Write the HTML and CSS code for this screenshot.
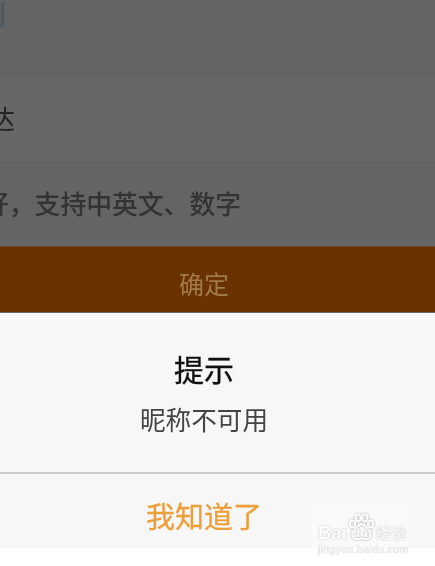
FILE: index.html
```html
<!DOCTYPE html>
<html lang="zh-CN">
<head>
<meta charset="utf-8">
<title>提示</title>
<link rel="stylesheet" href="styles.css">
</head>
<body>
<main class="page">
  <section class="form">
    <div class="row row-top"><span class="clip clip-top">别</span></div>
    <div class="row row-name"><span class="clip clip-name">达</span></div>
    <div class="row row-hint"><span class="clip clip-hint">好，支持中英文、数字</span></div>
    <div class="submit"><span class="soft">确定</span></div>
  </section>
  <section class="dialog">
    <div class="dialog-body">
      <h1 class="title soft">提示</h1>
      <p class="message soft">昵称不可用</p>
    </div>
    <div class="dialog-action"><span class="soft">我知道了</span></div>
  </section>
  <div class="wm-patch"></div>
  <div class="watermark">
    <div class="wm-logo">
      <span class="wm-bai">Bai</span>
      <span class="wm-du">
        <svg class="wm-paw" viewBox="0 0 36 36" width="27" height="28" aria-hidden="true">
          <g fill="none" stroke="#fff" stroke-width="2.6">
            <ellipse cx="6" cy="14" rx="3.6" ry="4.6"/>
            <ellipse cx="13.5" cy="6" rx="3.6" ry="4.6"/>
            <ellipse cx="22.5" cy="6" rx="3.6" ry="4.6"/>
            <ellipse cx="30" cy="14" rx="3.6" ry="4.6"/>
            <path d="M18 14c-4 0-5 4-9 7-5 4-4 13 3 13 2 0 4-1 6-1s4 1 6 1c7 0 8-9 3-13-4-3-5-7-9-7z"/>
          </g>
        </svg>
        <span class="wm-du-text">du</span>
      </span>
      <span class="wm-jy">经验</span>
    </div>
    <div class="wm-url">jingyan.baidu.com</div>
  </div>
</main>
</body>
</html>
```
FILE: styles.css
```css
* { box-sizing: border-box; margin: 0; padding: 0; }
html, body { width: 435px; height: 566px; overflow: hidden; background: #fff; }
body { font-family: "Noto Sans CJK SC", "Noto Sans", sans-serif; }
.page { position: relative; width: 435px; height: 566px; }
.soft { filter: blur(0.5px); }

.form { display: flex; flex-direction: column; height: 313px; background: #666; overflow: hidden; }
.row { overflow: hidden; white-space: nowrap; display: flex; align-items: center; flex: none; }
.row-top { height: 76px; align-items: flex-start; border-bottom: 1px solid #606060; background: #646464; }
.row-name { height: 86px; background: #676767; border-bottom: 1px solid #616161; }
.row-hint { height: 77px; background: #646464; border-bottom: 1px solid #5e6368; padding-top: 6px; }
.clip { display: block; font-size: 26px; line-height: 1; color: #2e2e2e; filter: blur(0.7px); }
.clip-top { margin: 0 0 0 -21px; font-size: 27px; color: #4a5560; }
.clip-name { margin: -2px 0 0 -11px; color: #222; }
.clip-hint { margin: 0 0 0 -17px; font-size: 25.8px; color: #333; font-weight: 500; }
.submit { height: 66px; margin-top: 7px; background: #693200; border-top: 1px solid #6f4a20; color: #a07a4c; font-size: 25px; display: flex; align-items: center; justify-content: center; flex: none; padding: 6px 27px 0 0; }

.dialog { height: 235px; background: #f7f7f7; display: flex; flex-direction: column; }
.dialog-body { height: 161px; border-bottom: 2px solid #cfcfcf; display: flex; flex-direction: column; align-items: center; padding: 33px 27px 0 0; }
.title { font-size: 30px; line-height: 44px; font-weight: 400; color: #111; -webkit-text-stroke: 0.3px #111; }
.message { font-size: 25.6px; line-height: 38px; margin-top: 10px; color: #444; }
.dialog-action { flex: 1; display: flex; align-items: center; justify-content: center; padding: 7px 27px 0 0; font-size: 29px; font-weight: 400; color: #ec9f3c; -webkit-text-stroke: 0.3px #ec9f3c; }

.wm-patch { position: absolute; left: 312px; top: 504px; width: 96px; height: 44px; background: #fafafa; }
.watermark { position: absolute; left: 312px; top: 513px; width: 100px; color: #fff; filter: blur(0.3px); text-shadow: 0 0 1.5px #aaa; }
.wm-logo { display: flex; align-items: flex-end; height: 28px; font-family: "Liberation Sans", sans-serif; }
.wm-bai { font-size: 18.5px; line-height: 16px; font-weight: 700; margin-left: 6px; }
.wm-du { position: relative; width: 27px; height: 28px; flex: none; margin-left: 1px; }
.wm-paw { display: block; filter: drop-shadow(0 0 0.8px #a8a8a8); }
.wm-du-text { position: absolute; left: 5px; bottom: 2px; font-size: 12px; line-height: 12px; font-weight: 700; }
.wm-jy { font-family: "Noto Sans CJK SC", sans-serif; font-size: 15.5px; line-height: 17px; white-space: nowrap; margin-left: 1px; }
.wm-url { font-family: "Liberation Sans", sans-serif; font-size: 10.5px; line-height: 10px; margin: 3px 0 0 6px; white-space: nowrap; letter-spacing: 0.35px; color: #f2f2f2; text-shadow: 0 0 1px #bbb; }
```
